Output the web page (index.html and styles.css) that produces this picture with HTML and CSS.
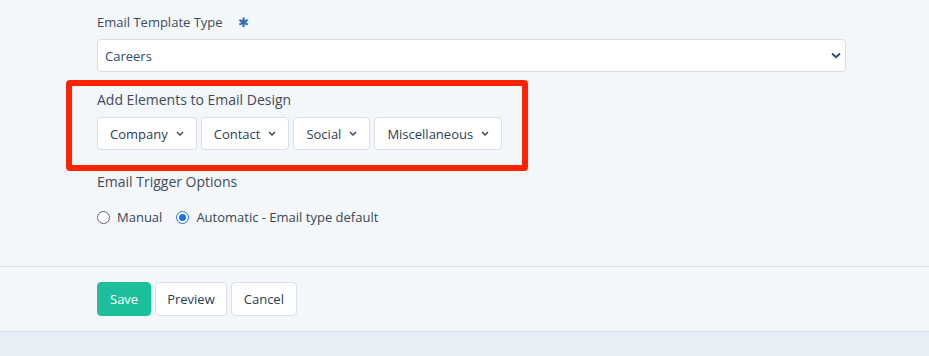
FILE: index.html
```html
<!DOCTYPE html>
<html lang="en">
<head>
  <meta charset="UTF-8">
  <title>Email Template</title>
  <link rel="stylesheet" href="styles.css">
</head>
<body>
  <div class="form-body">
    <div class="field">
      <label class="label">Email Template Type <span class="req">&#x2731;</span></label>
      <div class="select">
        <span>Careers</span>
        <svg class="select-chev" width="10" height="7" viewBox="0 0 10 7"><path d="M1 1.5 L5 5.2 L9 1.5" fill="none" stroke="#2c4a72" stroke-width="2"/></svg>
      </div>
    </div>

    <div class="highlight">
      <div class="label label-lg">Add Elements to Email Design</div>
      <div class="drop-row">
        <button class="drop">Company <svg width="8" height="5" viewBox="0 0 8 5"><path d="M1 1 L4 4 L7 1" fill="none" stroke="#2c3e55" stroke-width="1.3"/></svg></button>
        <button class="drop">Contact <svg width="8" height="5" viewBox="0 0 8 5"><path d="M1 1 L4 4 L7 1" fill="none" stroke="#2c3e55" stroke-width="1.3"/></svg></button>
        <button class="drop">Social <svg width="8" height="5" viewBox="0 0 8 5"><path d="M1 1 L4 4 L7 1" fill="none" stroke="#2c3e55" stroke-width="1.3"/></svg></button>
        <button class="drop">Miscellaneous <svg width="8" height="5" viewBox="0 0 8 5"><path d="M1 1 L4 4 L7 1" fill="none" stroke="#2c3e55" stroke-width="1.3"/></svg></button>
      </div>
    </div>

    <div class="field trigger">
      <div class="label label-lg">Email Trigger Options</div>
      <div class="radios">
        <label class="radio"><span class="dot"></span>Manual</label>
        <label class="radio"><span class="dot on"></span>Automatic - Email type default</label>
      </div>
    </div>
  </div>

  <div class="actions">
    <button class="btn btn-save">Save</button>
    <button class="btn btn-preview">Preview</button>
    <button class="btn">Cancel</button>
  </div>
  <div class="bottom"></div>
</body>
</html>
```

FILE: styles.css
```css
body {
  margin: 0;
  background-color: #f4f7fa;
  font-family: "Open Sans", "Noto Sans", sans-serif;
  font-size: 13px;
  color: #3d4a5c;
}
.form-body {
  padding: 12px 83px 0 97px;
  height: 254px;
  border-bottom: 1px solid #d8dfe7;
}
.label {
  display: block;
  font-size: 13px;
  line-height: 20px;
  color: #3f4b5b;
}
.label-lg {
  font-size: 14px;
}
.req {
  color: #2f6db5;
  margin-left: 12px;
  font-size: 13px;
}
.select {
  margin-top: 7px;
  height: 31px;
  background: #fff;
  border: 1px solid #d8dee6;
  border-radius: 4px;
  display: flex;
  align-items: center;
  justify-content: space-between;
  padding: 0 4px 0 7px;
  color: #2c4a6e;
  font-size: 13px;
}
.highlight {
  margin: 8px 0 0 -31px;
  width: 425px;
  height: 75px;
  border: 6px solid #ff2200;
  border-radius: 4px;
  padding: 4px 0 0 25px;
}
.drop-row {
  display: flex;
  gap: 4px;
  margin-top: 7px;
}
.drop {
  height: 33px;
  background: #fff;
  border: 1px solid #d9dfe7;
  border-radius: 4px;
  font-family: inherit;
  font-size: 13px;
  color: #2c3e55;
  padding: 0 12px;
  display: flex;
  align-items: center;
  gap: 8px;
}
.trigger {
  margin-top: 1px;
}
.radios {
  display: flex;
  gap: 14px;
  margin-top: 16px;
}
.radio {
  display: flex;
  align-items: center;
  gap: 7px;
  color: #3a4656;
  font-size: 13px;
}
.dot {
  width: 11px;
  height: 11px;
  border: 1px solid #5f6368;
  border-radius: 50%;
  background: #fff;
  position: relative;
}
.dot.on {
  border-color: #1a73e8;
}
.dot.on::after {
  content: "";
  position: absolute;
  left: 2px;
  top: 2px;
  width: 7px;
  height: 7px;
  border-radius: 50%;
  background: #1a73e8;
}
.actions {
  display: flex;
  gap: 4px;
  padding: 15px 0 0 97px;
  height: 49px;
  border-bottom: 1px solid #d8dfe7;
}
.btn {
  height: 34px;
  padding: 0 12px;
  background: #fff;
  border: 1px solid #d9dfe7;
  border-radius: 4px;
  font-family: inherit;
  font-size: 13px;
  color: #2c3e55;
}
.btn-preview {
  padding: 0 11px;
}
.btn-save {
  background: #1dbf9b;
  border-color: #1dbf9b;
  color: #fff;
}
.bottom {
  background: #e7eef5;
  height: 30px;
}
```
